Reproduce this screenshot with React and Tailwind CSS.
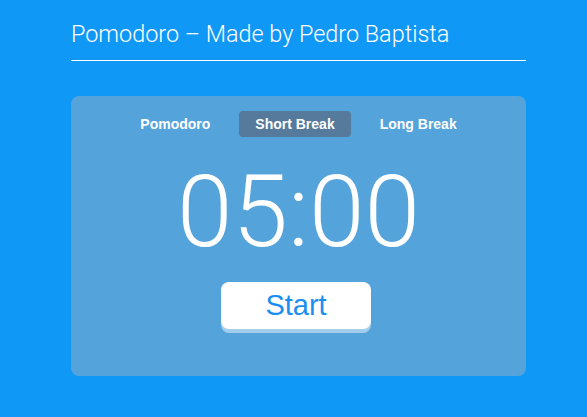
import React from 'react'

const tabs = ['Pomodoro', 'Short Break', 'Long Break']

export default function App() {
  const active = 'Short Break'

  return (
    <div className="min-h-[417px] w-full bg-[#1098f6] font-['Roboto',sans-serif]">
      <div className="ml-[71px] w-[455px] pt-[18px]">
        <header className="border-b border-white pb-[10px]">
          <h1 className="text-[23.4px] leading-[32px] font-light text-white">
            Pomodoro – Made by Pedro Baptista
          </h1>
        </header>

        <main className="mt-[35px] h-[280px] rounded-lg bg-[#55a3db] pt-[15px]">
          <nav className="flex justify-center gap-[13px] font-['Liberation_Sans',sans-serif]">
            {tabs.map((tab) => (
              <button
                key={tab}
                className={
                  'h-[26px] rounded px-[16px] text-[14px] font-bold text-white ' +
                  (tab === active ? 'bg-[#557a9b]' : '')
                }
              >
                {tab}
              </button>
            ))}
          </nav>

          <div className="mt-[20px] text-center text-[100px] leading-[110px] font-light text-white">
            05:00
          </div>

          <div className="mt-[15px] flex justify-center pr-[5px]">
            <button className="h-[47px] w-[150px] rounded-lg bg-white font-['Liberation_Sans',sans-serif] text-[29px] text-[#1a8ff0] shadow-[0_4px_0_#a4cdec]">
              Start
            </button>
          </div>
        </main>
      </div>
    </div>
  )
}
